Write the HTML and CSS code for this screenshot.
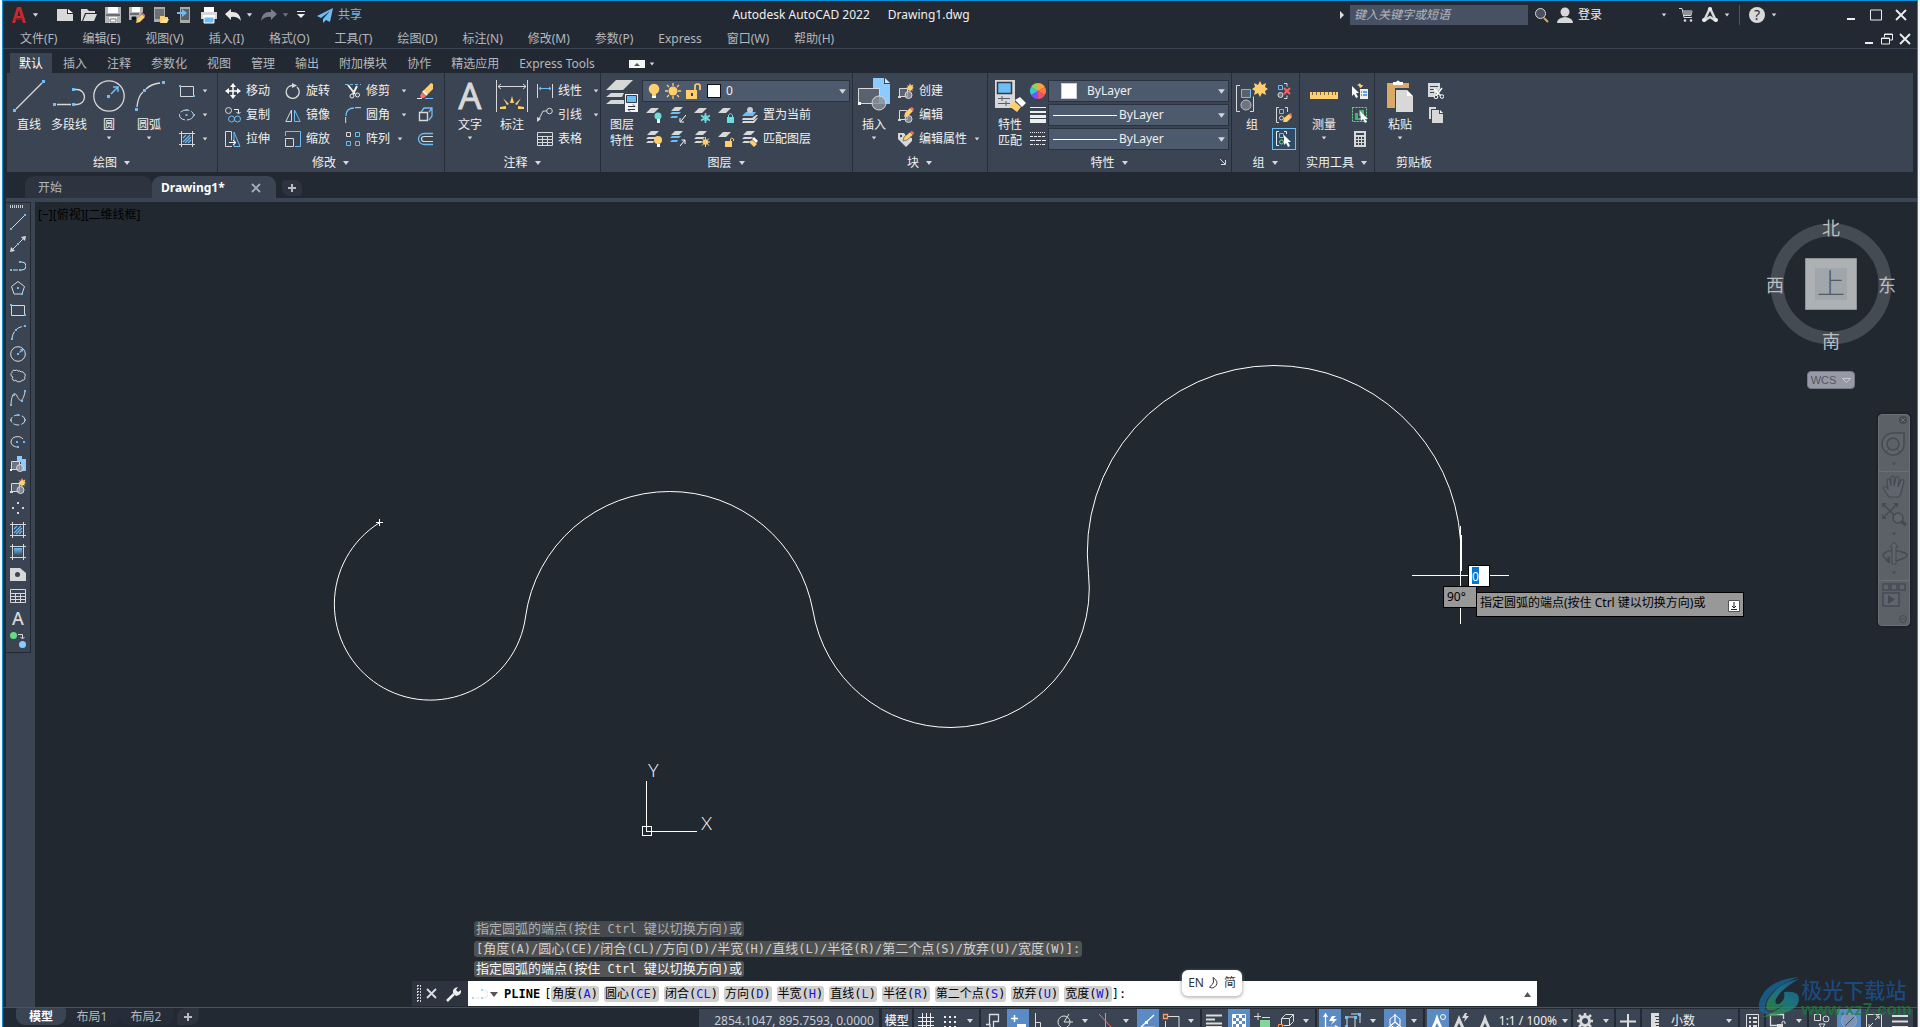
FILE: index.html
```html
<!DOCTYPE html>
<html lang="zh-CN">
<head>
<meta charset="utf-8">
<title>Autodesk AutoCAD 2022 Drawing1.dwg</title>
<link rel="stylesheet" href="styles.css">
</head>
<body>
<svg class="defs" aria-hidden="true">
  <defs>
    <linearGradient id="grad" x1="0" y1="0" x2="0" y2="1"><stop offset="0" stop-color="#6dbdf7"/><stop offset="1" stop-color="#3b4453"/></linearGradient>
    <linearGradient id="swirl" x1="1" y1="0" x2="0.3" y2="1"><stop offset="0" stop-color="#1766a8"/><stop offset="0.5" stop-color="#1c8a9a"/><stop offset="1" stop-color="#2d9a3a"/></linearGradient>
    <symbol id="dn" viewBox="0 0 8 4"><path d="M1 0h6L4 4z" fill="#d8d8d8"/></symbol>
    <symbol id="line" viewBox="0 0 16 16"><path d="M2 14L14 2" stroke="#d8d8d8"/><path d="M0 14h2v2H0zM14 0h2v2h-2z" fill="#6dbdf7"/></symbol>
    <symbol id="xline" viewBox="0 0 16 16"><path d="M2 14L14 2" stroke="#d8d8d8"/><path d="M0 16l1-5 4 4zM16 0l-1 5-4-4z" fill="#d8d8d8"/><path d="M7 7h2v2H7z" fill="#6dbdf7"/></symbol>
    <symbol id="pline" viewBox="0 0 16 16"><path d="M3 12h5M11 4h1a4 4 0 0 1 0 8h-1" fill="none" stroke="#d8d8d8"/><path d="M0 11h2v2H0zM9 11h2v2H9zM9 3h2v2H9z" fill="#6dbdf7"/></symbol>
    <symbol id="polygon" viewBox="0 0 16 16"><path d="M8 1.500L14.500 6.500 12 14H4L1.500 6.500z" fill="none" stroke="#d8d8d8"/><path d="M7 7h2v2H7zM11 13h2v2h-2z" fill="#6dbdf7"/></symbol>
    <symbol id="rect" viewBox="0 0 16 16"><path d="M1.500 3.500h13v10h-13z" fill="none" stroke="#d8d8d8"/><path d="M0 2h2v2H0zM14 12h2v2h-2z" fill="#6dbdf7"/></symbol>
    <symbol id="arc" viewBox="0 0 16 16"><path d="M2 14Q4 3 15 2" fill="none" stroke="#d8d8d8" stroke-dasharray="7 2"/><path d="M1 14h2v2H1zM5 5h2v2H5zM14 1h2v2h-2z" fill="#6dbdf7"/></symbol>
    <symbol id="circle" viewBox="0 0 16 16"><circle cx="8" cy="8" r="7.300" fill="none" stroke="#d8d8d8"/><path d="M7 7h2v2H7zM10 3h3v3l-1-1-2 2-1-1 2-2z" fill="#6dbdf7"/></symbol>
    <symbol id="cloud" viewBox="0 0 16 16"><path d="M3 9a2.500 2.500 0 0 1-1-4.500A2 2 0 0 1 5 2.500a2 2 0 0 1 3 .8 2 2 0 0 1 3 .7 2 2 0 0 1 3 1.500 2 2 0 0 1 .5 3.500A2 2 0 0 1 12 12a2 2 0 0 1-3 1.500A2 2 0 0 1 6 12 2 2 0 0 1 3 9z" fill="none" stroke="#d8d8d8"/></symbol>
    <symbol id="spline" viewBox="0 0 16 16"><path d="M1 14C2 2 5 2 7 6s5 9 8-4" fill="none" stroke="#d8d8d8"/><path d="M0 14h2v2H0zM3 4h2v2H3zM11 10h2v2h-2zM14 0h2v2h-2z" fill="#6dbdf7"/></symbol>
    <symbol id="ellipse" viewBox="0 0 16 16"><ellipse cx="8" cy="8" rx="7" ry="5" fill="none" stroke="#d8d8d8" stroke-dasharray="6 2"/><path d="M0 7h2v2H0zM14 7h2v2h-2zM7 2h2v2H7z" fill="#6dbdf7"/></symbol>
    <symbol id="ellipse2" viewBox="0 0 16 16"><ellipse cx="7.500" cy="8" rx="7" ry="5" fill="none" stroke="#d8d8d8" stroke-dasharray="9 2"/><path d="M6.500 7h2v2h-2zM14 7h2v2h-2zM6.500 2h2v2h-2z" fill="#6dbdf7"/></symbol>
    <symbol id="earc" viewBox="0 0 16 16"><path d="M13 5C10 1 1 2 1 8c0 3 3 5 7 5" fill="none" stroke="#d8d8d8"/><path d="M6 7h2v2H6zM13 7h2v2h-2zM7 12h2v2H7z" fill="#6dbdf7"/></symbol>
    <symbol id="blockins" viewBox="0 0 16 16"><path d="M7 0h5v3h4v12h-5V6H7z" fill="#8ccbff"/><path d="M1.500 5.500h8v8h-8z" fill="#6e7480" stroke="#d8d8d8"/><circle cx="10" cy="12" r="3.500" fill="#9aa0aa" fill-opacity=".7" stroke="#d8d8d8"/><path d="M0 13h2v2H0z" fill="#fff"/></symbol>
    <symbol id="blockmk" viewBox="0 0 16 16"><path d="M1.500 5.500h8v8h-8z" fill="#5a6270" stroke="#d8d8d8"/><circle cx="10.500" cy="12" r="3.500" fill="#9aa0aa" fill-opacity=".7" stroke="#d8d8d8"/><path d="M0 13h3v2H0z" fill="#d8d8d8"/><path d="M12 0l1 2.500 2.500-1-1 2.500L16 5l-2 1 1 2-2-1-1 2-1-2-2 1 1-2-2-1 2-1-1-2 2 1z" fill="#ffcf6f"/></symbol>
    <symbol id="blocked" viewBox="0 0 16 16"><path d="M9 3.500H1.500v9h8z" fill="none" stroke="#d8d8d8"/><circle cx="10.500" cy="12" r="3.500" fill="#9aa0aa" fill-opacity=".7" stroke="#d8d8d8"/><path d="M0 12h3v2H0z" fill="#d8d8d8"/><path d="M6 10l1-4 5-5 3 3-5 5z" fill="#ffcf6f"/><path d="M12 1l2-1 2 2-1 2z" fill="#ff6b6b"/></symbol>
    <symbol id="tagedit" viewBox="0 0 16 16"><path d="M0 2h6l2 3 6 2v3l-6 6-8-8z" fill="#d8d8d8"/><circle cx="3" cy="5" r="1.200" fill="#3b4453"/><path d="M5 10l1-4 6-5 3 3-6 5z" fill="#ffcf6f" stroke="#3b4453" stroke-width=".6"/><path d="M12 1l2-1 2 2-1 2z" fill="#ff6b6b"/></symbol>
    <symbol id="points" viewBox="0 0 16 16"><path d="M7 2h2v2H7zM2 7h2v2H2zM12 7h2v2h-2zM7 12h2v2H7z" fill="#d8d8d8"/></symbol>
    <symbol id="hatch" viewBox="0 0 16 16"><path d="M2.500 0v16M13.500 0v16M0 2.500h16M0 13.500h16" stroke="#d8d8d8"/><path d="M4 7l3-3M4 11l7-7M6 12l6-6M9 12l3-3" stroke="#6dbdf7" stroke-width="1.200"/></symbol>
    <symbol id="gradient" viewBox="0 0 16 16"><path d="M2.500 0v16M13.500 0v16M0 2.500h16M0 13.500h16" stroke="#d8d8d8"/><path d="M4 4h8v8H4z" fill="url(#grad)"/></symbol>
    <symbol id="region" viewBox="0 0 16 16"><path d="M0 2h10l6 5v8H0z" fill="#d8d8d8"/><circle cx="7.500" cy="8.500" r="2.500" fill="#3b4453"/></symbol>
    <symbol id="table" viewBox="0 0 16 16"><path d="M.5 1.500h15v13H.5zM.5 5.500h15M.5 8.500h15M.5 11.500h15M5.500 5v10M10.500 5v10" fill="none" stroke="#d8d8d8"/></symbol>
    <symbol id="addsel" viewBox="0 0 16 16"><circle cx="3.500" cy="3.500" r="3.500" fill="#60dd85"/><circle cx="12.500" cy="12.500" r="3.500" fill="#8ccbff"/><path d="M8 2.500h4.500V6M10.500 5l2 2 2-2" fill="none" stroke="#d8d8d8"/></symbol>
    <symbol id="move" viewBox="0 0 16 16"><path d="M8 2v12M2 8h12" stroke="#fff" stroke-width="1.500"/><path d="M8 0l3 4H5zM8 16l3-4H5zM0 8l4-3v6zM16 8l-4-3v6z" fill="#fff"/></symbol>
    <symbol id="rotate" viewBox="0 0 16 16"><path d="M9 2.500A6.500 6.500 0 1 0 12 4" fill="none" stroke="#d8d8d8" stroke-width="1.300"/><path d="M7 0l5 2.500L7 5z" fill="#d8d8d8"/></symbol>
    <symbol id="trim" viewBox="0 0 16 16"><path d="M0 1.500h16" stroke="#6dbdf7" stroke-dasharray="3 2"/><path d="M3 2l7 9M12 3L8 11" stroke="#eee" stroke-width="2"/><circle cx="7" cy="13" r="2" fill="none" stroke="#eee"/><circle cx="12.500" cy="12" r="2" fill="none" stroke="#eee"/></symbol>
    <symbol id="erase" viewBox="0 0 16 16"><path d="M0 15.500h5" stroke="#eee"/><path d="M8 15.500h8" stroke="#6dbdf7"/><path d="M14 0l2 1v5l-7 7-4-4z" fill="#ffcf6f"/><path d="M5 9l4 4-2 2H4l-1-2z" fill="#ff6b6b"/><path d="M6 8l4 4" stroke="#fff" stroke-width="1.500"/></symbol>
    <symbol id="copy" viewBox="0 0 16 16"><circle cx="3.500" cy="3.500" r="3" fill="none" stroke="#d8d8d8"/><path d="M9 2.500h4.500V6M11.500 5l2 2 2-2" fill="none" stroke="#eee"/><circle cx="6.500" cy="12" r="3" fill="none" stroke="#6dbdf7"/><circle cx="12.500" cy="12" r="3" fill="none" stroke="#6dbdf7"/></symbol>
    <symbol id="mirror" viewBox="0 0 16 16"><path d="M6.500 3v11.500H.8z" fill="none" stroke="#d8d8d8"/><path d="M9.500 3v11.500h5.700z" fill="none" stroke="#6dbdf7"/></symbol>
    <symbol id="fillet" viewBox="0 0 16 16"><path d="M1 9Q1 1 9 1" fill="none" stroke="#6dbdf7" stroke-width="1.300"/><path d="M.7 10v6M10 .7h6" stroke="#d8d8d8"/></symbol>
    <symbol id="explode" viewBox="0 0 16 16"><path d="M4 5l3-4h8v8l-3 4M12 5l3-4" fill="none" stroke="#6dbdf7" stroke-width="1.300"/><path d="M2.500 5.500h8v8h-8z" fill="none" stroke="#d8d8d8" stroke-width="1.400"/></symbol>
    <symbol id="stretch" viewBox="0 0 16 16"><path d="M7 15.500H.5V.5h6v9" fill="none" stroke="#d8d8d8"/><path d="M9 1l6 14.500H9V1" fill="none" stroke="#6dbdf7"/><path d="M4 11.500h6M8 9l3 2.500L8 14" fill="none" stroke="#fff"/></symbol>
    <symbol id="scale" viewBox="0 0 16 16"><path d="M.5 5V.5h15v15H10" fill="none" stroke="#6dbdf7"/><path d="M.5 7.500h8v8h-8z" fill="none" stroke="#d8d8d8"/></symbol>
    <symbol id="array" viewBox="0 0 16 16"><path d="M1.500 1.500h4v4h-4z" fill="none" stroke="#d8d8d8"/><path d="M10.500 1.500h4v4h-4zM1.500 10.500h4v4h-4zM10.500 10.500h4v4h-4z" fill="none" stroke="#6dbdf7"/></symbol>
    <symbol id="offset" viewBox="0 0 16 16"><path d="M16 2.500H7a5.500 5.500 0 0 0 0 11h9" fill="none" stroke="#6dbdf7" stroke-width="1.300"/><path d="M16 5.500H7a2.500 2.500 0 0 0 0 5h9" fill="none" stroke="#d8d8d8" stroke-width="1.200"/></symbol>
    <symbol id="dimlin" viewBox="0 0 16 16"><path d="M.5 1v14M15.500 1v14" stroke="#d8d8d8"/><path d="M2 5.500h12M4 4L2 5.500 4 7M12 4l2 1.500L12 7" fill="none" stroke="#6dbdf7"/></symbol>
    <symbol id="leader" viewBox="0 0 16 16"><circle cx="12.500" cy="4" r="2.800" fill="none" stroke="#d8d8d8"/><path d="M10 4H6L2 12" fill="none" stroke="#d8d8d8"/><path d="M0 15v-5l4 2z" fill="#d8d8d8"/></symbol>
    <symbol id="bulb" viewBox="0 0 12 16"><circle cx="6" cy="6" r="5.300" fill="#ffcf6f"/><path d="M4 11h4v2H4z" fill="#ffcf6f"/><path d="M4 13h4v2H4z" fill="#fff"/></symbol>
    <symbol id="sun" viewBox="0 0 16 16"><circle cx="8" cy="8" r="4.500" fill="#ffcf6f"/><path d="M8 0v3M8 13v3M0 8h3M13 8h3M2 2l2 2M12 12l2 2M2 14l2-2M12 4l2-2" stroke="#ffcf6f" stroke-width="1.300"/></symbol>
    <symbol id="unlock" viewBox="0 0 16 16"><path d="M0 7h11v9H0z" fill="#ffcf6f"/><path d="M9 7V3q0-2 2.500-2T14 3v4" fill="none" stroke="#ffcf6f" stroke-width="1.700"/><path d="M5 10h2v3H5z" fill="#3b4453"/></symbol>
    <symbol id="lyr" viewBox="0 0 16 16"><path d="M5 1h8L8 6H0z" fill="#d8d8d8"/></symbol>
    <symbol id="lyrs" viewBox="0 0 16 16"><path d="M5 0h8L9 4H1zM2 6h9l-2 2H0zM2 10h6l-1 2H0z" fill="#d8d8d8"/></symbol>
    <symbol id="loff" viewBox="0 0 16 16"><use href="#lyr"/><circle cx="12" cy="9" r="3.500" fill="#6fdcdc"/><path d="M11 12h3v4h-3z" fill="#dff"/></symbol>
    <symbol id="liso" viewBox="0 0 16 16"><path d="M5 0h8L9 4H1z" fill="#d8d8d8"/><path d="M2 5h9l-2 2H0zM2 9h6l-1 2H0z" fill="#6dbdf7"/><path d="M16 8l-5 6M10 11v4h4" fill="none" stroke="#fff"/></symbol>
    <symbol id="lfrz" viewBox="0 0 16 16"><use href="#lyr"/><path d="M11.500 6v10M7 8.500l9 5M16 8.500l-9 5" stroke="#6fdcdc" stroke-width="1.600"/><circle cx="11.500" cy="11" r="2.500" fill="none" stroke="#6fdcdc"/></symbol>
    <symbol id="llock" viewBox="0 0 16 16"><use href="#lyr"/><path d="M9 10h7v6H9z" fill="#6fdcdc"/><path d="M10.500 10V8q2-3 4 0v2" fill="none" stroke="#6fdcdc"/></symbol>
    <symbol id="lcur" viewBox="0 0 16 16"><path d="M4 5h10l-3 4H0z" fill="#6dbdf7"/><circle cx="8" cy="3" r="3" fill="#c8ccd2"/><path d="M14 8h2l-4 5H0l1-2h9zM15 11h1l-4 5H0l1-2h10z" fill="#d8d8d8"/></symbol>
    <symbol id="lon" viewBox="0 0 16 16"><use href="#lyrs"/><circle cx="12" cy="9" r="4" fill="#ffcf6f"/><path d="M11 13h3v3h-3z" fill="#fff"/></symbol>
    <symbol id="luniso" viewBox="0 0 16 16"><path d="M5 0h8L9 4H1z" fill="#d8d8d8"/><path d="M2 5h9l-2 2H0zM2 9h6l-1 2H0z" fill="#6dbdf7"/><path d="M10 15l5-6M11.500 9H15v4" fill="none" stroke="#fff"/></symbol>
    <symbol id="lthaw" viewBox="0 0 16 16"><use href="#lyrs"/><circle cx="11.500" cy="11" r="2.800" fill="#ffcf6f"/><path d="M11.500 6v10M6.500 11h10M8 7.500l7 7M15 7.500l-7 7" stroke="#ffcf6f"/></symbol>
    <symbol id="lunl" viewBox="0 0 16 16"><use href="#lyr"/><path d="M7 10h7v6H7z" fill="#ffcf6f"/><path d="M12.500 10V8q1-2 3 0v2" fill="none" stroke="#ffcf6f"/></symbol>
    <symbol id="lmatch" viewBox="0 0 16 16"><use href="#lyrs"/><path d="M7 11l3-2 5 4-3 3z" fill="#ffcf6f"/><path d="M10 8l2-2 4 4-2 2z" fill="#fff"/></symbol>
    <symbol id="ltypes" viewBox="0 0 16 16"><path d="M0 .5h16" stroke="#eee"/><path d="M0 5h16" stroke="#eee" stroke-width="2"/><path d="M0 9.500h16" stroke="#eee" stroke-width="3"/><path d="M0 14h16" stroke="#eee" stroke-width="4"/></symbol>
    <symbol id="ldash" viewBox="0 0 16 16"><path d="M0 1.500h16" stroke="#eee" stroke-dasharray="1 1"/><path d="M0 5.500h16" stroke="#eee" stroke-dasharray="3 1"/><path d="M0 9.500h16" stroke="#eee" stroke-dasharray="5 1"/><path d="M0 13.500h16" stroke="#eee" stroke-dasharray="3 1 1 1"/></symbol>
    <symbol id="wheel" viewBox="0 0 16 16"><path d="M8 8L8 0a8 8 0 0 1 6.900 4z" fill="#ffa03c"/><path d="M8 8l6.900-4a8 8 0 0 1 0 8z" fill="#ff7a3c"/><path d="M8 8l6.900 4A8 8 0 0 1 8 16z" fill="#f0506a"/><path d="M8 8v8a8 8 0 0 1-6.900-4z" fill="#7a50ff"/><path d="M8 8l-6.900 4a8 8 0 0 1 0-8z" fill="#38c8d8"/><path d="M8 8L1.100 4A8 8 0 0 1 8 0z" fill="#8fd35a"/></symbol>
    <symbol id="ungrp" viewBox="0 0 16 16"><path d="M2.500 2.500h4v4h-4z" fill="none" stroke="#6dbdf7"/><circle cx="4.500" cy="12" r="2.500" fill="#6e7480" stroke="#d8d8d8"/><path d="M8 .5h3v3M8 15.500h3v-3" fill="none" stroke="#d8d8d8"/><path d="M8 5l6 6M14 5l-6 6" stroke="#ff5e5e" stroke-width="2"/></symbol>
    <symbol id="grped" viewBox="0 0 16 16"><path d="M3 .5H.5v15H3M9 .5h2.500V5" fill="none" stroke="#d8d8d8"/><path d="M3.500 2.500h4v4h-4z" fill="none" stroke="#6dbdf7"/><circle cx="5.500" cy="11" r="2" fill="none" stroke="#d8d8d8"/><path d="M7 15l1-4 5-4 3 3-5 5z" fill="#ffcf6f"/><path d="M13 7l2-1 1 2-1 2z" fill="#ff6b6b"/></symbol>
    <symbol id="grpsel" viewBox="0 0 16 16"><path d="M3 .5H.5v14H3M8 .5h2.500V3" fill="none" stroke="#eee"/><path d="M3.500 2.500h4v4h-4z" fill="none" stroke="#60dd85"/><circle cx="5.500" cy="11" r="2" fill="none" stroke="#60dd85"/><path d="M8 4l7 7h-3l2 4-2 1-2-4-2 2z" fill="#fff"/></symbol>
    <symbol id="qsel" viewBox="0 0 16 16"><path d="M0 3l7 7H4l2 4-2 1-2-4-2 2z" fill="#fff"/><path d="M8 0l1 2 2 0-1 2-2 1-1-2-2-1 2-1z" fill="#ffcf6f"/><path d="M8 6h8v10H8z" fill="#eee"/><path d="M9 9h1M11 9h4M9 12h1M11 12h4" stroke="#2a8de0" stroke-width="1.500"/></symbol>
    <symbol id="selall" viewBox="0 0 16 16"><path d="M.5.500h14v14H.5z" fill="none" stroke="#60dd85" stroke-dasharray="2 1"/><path d="M3 6h3v5h4v2H3zM7 3h5v6H7z" fill="#4fae6e"/><path d="M8 4l8 8h-3l2 3-2 1-2-4-2 2z" fill="#fff"/></symbol>
    <symbol id="calc" viewBox="0 0 16 16"><path d="M2 0h12v16H2z" fill="#d8d8d8"/><path d="M4 2h8v2H4zM4 6h2v2H4zM7 6h2v2H7zM10 6h2v2h-2zM4 9h2v2H4zM7 9h2v2H7zM10 9h2v2h-2zM4 12h2v2H4zM7 12h2v2H7zM10 12h2v2h-2z" fill="#3b4453"/></symbol>
    <symbol id="cut" viewBox="0 0 16 16"><path d="M0 0h12v6l-6 8H0z" fill="#d8d8d8"/><path d="M2 3.500h8M2 6.500h5M2 9.500h4" stroke="#3b4453"/><path d="M6 6l7 7M14 5l-6 8" stroke="#fff" stroke-width="1.500"/><circle cx="8" cy="14" r="1.800" fill="#3b4453" stroke="#fff"/><circle cx="14" cy="13.500" r="1.800" fill="#3b4453" stroke="#fff"/></symbol>
    <symbol id="copyclip" viewBox="0 0 16 16"><path d="M1 0h7v2H3v10H1z" fill="#d8d8d8"/><path d="M4 3h7v4h4v9H4z" fill="#d8d8d8"/><path d="M12 3v3h3z" fill="#fff"/></symbol>
    <symbol id="launch" viewBox="0 0 8 8"><path d="M1 1l5 5M6.500 2v4.500H2" fill="none" stroke="#d8d8d8"/></symbol>
    <symbol id="winmin" viewBox="0 0 12 12"><path d="M2 10h8" stroke="#eee" stroke-width="2"/></symbol>
    <symbol id="winmax" viewBox="0 0 12 12"><path d="M.5 1h11v10H.5z" fill="none" stroke="#eee"/></symbol>
    <symbol id="winres" viewBox="0 0 12 12"><path d="M3.500 4V1h8v6H8.500M.5 5h8v6h-8z" fill="none" stroke="#eee"/><path d="M3 1.500h9M0 5.500h9" stroke="#eee"/></symbol>
    <symbol id="winx" viewBox="0 0 12 12"><path d="M1 1l10 10M11 1L1 11" stroke="#eee" stroke-width="1.800"/></symbol>
  </defs>
</svg>

<div class="frame">
  <header class="titlebar">
    <div class="quick">
      <button class="app" aria-label="AutoCAD"><svg width="14" height="16" viewBox="0 0 14 16"><path d="M5 0h4l5 16h-3l-2-5H5l-2 5H0zM7 3L5.500 9h3z" fill="#c8282e"/><path d="M4 11h6l1 2H3z" fill="#8c1c22"/></svg><svg class="dn"><use href="#dn"/></svg></button>
      <button aria-label="新建"><svg width="16" height="16"><path d="M0 2h10v5h6v7H0z" fill="#d8d8d8"/><path d="M11 2l5 4h-5z" fill="#fff"/></svg></button>
      <button aria-label="打开"><svg width="16" height="16"><path d="M0 2h6l2 2h6v2H4L1 14H0z" fill="#d8d8d8"/><path d="M5 7h11l-3 7H2z" fill="#d8d8d8"/></svg></button>
      <button aria-label="保存"><svg width="16" height="16"><path d="M0 0h16v16H0z" fill="#b4b4b4"/><path d="M3 0h10v6H3z" fill="#fff"/><path d="M1 8h14" stroke="#222933"/><path d="M4 10h8v6H4z" fill="#f5f5f5"/><path d="M5 12h6v3H5z" fill="#fff" stroke="#777"/></svg></button>
      <button aria-label="另存为"><svg width="16" height="16"><path d="M0 0h14v5l-6 8H0z" fill="#b4b4b4"/><path d="M3 0h8v5H3z" fill="#fff"/><path d="M1 7h9M3 10h4v3H3z" stroke="#222933"/><path d="M7 16l1-4 5-5 3 3-5 5z" fill="#ffcf6f"/><path d="M13 7l1-1 2 2v2z" fill="#ff6b6b"/></svg></button>
      <button aria-label="从移动设备打开"><svg width="16" height="16"><path d="M1 0h11v15H1z" fill="#aaa"/><path d="M2 2h9v10H2z" fill="#6c7076"/><path d="M7 9h4l1 1h3v2H9l-2 4z" fill="#ffcf6f"/><path d="M9 12h7l-2 4H7z" fill="#ffe08f"/></svg></button>
      <button aria-label="保存到移动设备"><svg width="16" height="16"><path d="M3 0h10v16H3z" fill="#aaa"/><path d="M4 2h8v11H4z" fill="#5c6066"/><path d="M0 5h5V2l5 4-5 4V7H0z" fill="#6dbdf7"/></svg></button>
      <button aria-label="打印"><svg width="16" height="16"><path d="M3 0h10v5H3z" fill="#fff"/><path d="M0 5h16v7H0z" fill="#d8d8d8"/><path d="M2 8h12v2H2z" fill="#fff"/><path d="M3 10h10v6H3z" fill="#6dbdf7" stroke="#fff"/></svg></button>
      <button aria-label="放弃"><svg width="16" height="16"><path d="M0 7l6-5v3q9-1 10 9-4-5-10-4v3z" fill="#e8e8e8"/></svg><svg class="dn"><use href="#dn"/></svg></button>
      <button class="dim" aria-label="重做"><svg width="16" height="16"><path d="M16 7l-6-5v3Q1 4 0 14q4-5 10-4v3z" fill="#e8e8e8"/></svg><svg class="dn"><use href="#dn"/></svg></button>
      <button aria-label="自定义"><svg width="8" height="8"><path d="M0 .5h8" stroke="#eee"/><path d="M0 3h8L4 7z" fill="#eee"/></svg></button>
      <button class="share"><svg width="16" height="16"><path d="M16 1L0 9l4 2L13 4 6 12l0 4 3-3 4 2z" fill="#6dbdf7"/></svg>共享</button>
    </div>
    <h1 class="apptitle"><span>Autodesk AutoCAD 2022</span><span>Drawing1.dwg</span></h1>
    <div class="account">
      <svg class="fly" width="4" height="8"><path d="M0 0v8l4-4z" fill="#ddd"/></svg>
      <input class="search" type="text" placeholder="键入关键字或短语" aria-label="搜索">
      <button aria-label="搜索"><svg width="16" height="16"><circle cx="6.500" cy="6.500" r="5" fill="#4a5060" stroke="#d8d8d8"/><path d="M10 11l4 4" stroke="#e0a860" stroke-width="2"/></svg></button>
      <button class="login"><svg width="16" height="16"><circle cx="8" cy="5" r="4.500" fill="#d8d8d8"/><path d="M0 16q0-5 8-6 8 1 8 6z" fill="#d8d8d8"/></svg><span>登录</span><svg class="dn sm-dn"><use href="#dn"/></svg></button>
      <button aria-label="购物车"><svg width="14" height="16"><path d="M0 1.500h3l2 9h8M3.500 4H13l-1 4.500H5" fill="none" stroke="#d8d8d8"/><path d="M4 4h9l-1 4H5z" fill="#8d9096"/><circle cx="6" cy="13.500" r="1.300" fill="#ddd"/><circle cx="12" cy="13.500" r="1.300" fill="#ddd"/></svg></button>
      <button class="adsk" aria-label="应用程序"><svg width="16" height="16"><path d="M8 1L2 14M8 1l6 13M2 14l6-4 6 4" fill="none" stroke="#d8d8d8" stroke-width="2.500"/><circle cx="8" cy="2" r="2" fill="#eee"/><circle cx="2" cy="13" r="2" fill="#eee"/><circle cx="14" cy="13" r="2" fill="#eee"/></svg><svg class="dn sm-dn"><use href="#dn"/></svg></button>
      <button class="help" aria-label="帮助"><svg width="16" height="16"><circle cx="8" cy="8" r="8" fill="#d8d8d8"/><text x="8" y="13" text-anchor="middle" class="q">?</text></svg><svg class="dn sm-dn"><use href="#dn"/></svg></button>
    </div>
    <div class="winbtns"><button aria-label="最小化"><svg width="12" height="12"><use href="#winmin"/></svg></button><button aria-label="最大化"><svg width="12" height="12"><use href="#winmax"/></svg></button><button aria-label="关闭"><svg width="12" height="12"><use href="#winx"/></svg></button></div>
  </header>

  <div class="menurow">
    <nav class="menus"><a href="#">文件(F)</a><a href="#">编辑(E)</a><a href="#">视图(V)</a><a href="#">插入(I)</a><a href="#">格式(O)</a><a href="#">工具(T)</a><a href="#">绘图(D)</a><a href="#">标注(N)</a><a href="#">修改(M)</a><a href="#">参数(P)</a><a href="#">Express</a><a href="#">窗口(W)</a><a href="#">帮助(H)</a></nav>
    <div class="docbtns"><button aria-label="最小化图形"><svg width="12" height="12"><use href="#winmin"/></svg></button><button aria-label="还原图形"><svg width="12" height="12"><use href="#winres"/></svg></button><button aria-label="关闭图形"><svg width="12" height="12"><use href="#winx"/></svg></button></div>
  </div>

  <nav class="rtabs">
    <button class="on">默认</button><button>插入</button><button>注释</button><button>参数化</button><button>视图</button><button>管理</button><button>输出</button><button>附加模块</button><button>协作</button><button>精选应用</button><button>Express Tools</button>
    <button class="mini" aria-label="最小化功能区"><svg width="16" height="8"><path d="M0 0h16v8H0z" fill="#f5f5f5"/><path d="M5 6h6L8 3z" fill="#555"/></svg><svg class="dn"><use href="#dn"/></svg></button>
  </nav>

  <section class="ribbon">
    <div class="panel p-draw">
      <div class="tools">
        <button class="big"><svg width="32" height="32"><path d="M3 29L29 3" stroke="#d8d8d8" stroke-width="1.300"/><path d="M0 29h3v3H0zM29 0h3v3h-3z" fill="#6dbdf7"/></svg>直线</button>
        <button class="big"><svg width="32" height="32"><path d="M4 24.500h14M22 9.500h2a7.500 7.500 0 0 1 0 15h-2" fill="none" stroke="#d8d8d8" stroke-width="1.300"/><path d="M0 23h3v3H0zM19 23h3v3h-3zM19 8h3v3h-3z" fill="#6dbdf7"/></svg>多段线</button>
        <button class="big"><svg width="32" height="32"><circle cx="16" cy="16" r="15.200" fill="none" stroke="#d8d8d8" stroke-width="1.300"/><path d="M18 14l7-7M20 7h5v5" fill="none" stroke="#6dbdf7" stroke-width="1.500"/><path d="M14 15h3v3h-3z" fill="#6dbdf7"/></svg>圆<svg class="dn"><use href="#dn"/></svg></button>
        <button class="big"><svg width="32" height="32"><path d="M4 27Q5 16 10 12M13 9Q18 4 27 3" fill="none" stroke="#d8d8d8" stroke-width="1.300"/><path d="M2 28h3v3H2zM10 9h3v3h-3zM29 1h3v3h-3z" fill="#6dbdf7"/></svg>圆弧<svg class="dn"><use href="#dn"/></svg></button>
        <div class="col">
          <button class="sm" aria-label="矩形"><svg><use href="#rect"/></svg><svg class="dn"><use href="#dn"/></svg></button>
          <button class="sm" aria-label="椭圆"><svg><use href="#ellipse2"/></svg><svg class="dn"><use href="#dn"/></svg></button>
          <button class="sm" aria-label="图案填充"><svg><use href="#hatch"/></svg><svg class="dn"><use href="#dn"/></svg></button>
        </div>
      </div>
      <button class="ptitle">绘图<svg class="dn"><use href="#dn"/></svg></button>
    </div>

    <div class="panel p-modify">
      <div class="tools grid4">
        <button class="sm"><svg><use href="#move"/></svg>移动</button><button class="sm"><svg><use href="#rotate"/></svg>旋转</button><button class="sm"><svg><use href="#trim"/></svg>修剪<svg class="dn end"><use href="#dn"/></svg></button><button class="sm" aria-label="删除"><svg><use href="#erase"/></svg></button>
        <button class="sm"><svg><use href="#copy"/></svg>复制</button><button class="sm"><svg><use href="#mirror"/></svg>镜像</button><button class="sm"><svg><use href="#fillet"/></svg>圆角<svg class="dn end"><use href="#dn"/></svg></button><button class="sm" aria-label="分解"><svg><use href="#explode"/></svg></button>
        <button class="sm"><svg><use href="#stretch"/></svg>拉伸</button><button class="sm"><svg><use href="#scale"/></svg>缩放</button><button class="sm"><svg><use href="#array"/></svg>阵列<svg class="dn"><use href="#dn"/></svg></button><button class="sm" aria-label="偏移"><svg><use href="#offset"/></svg></button>
      </div>
      <button class="ptitle">修改<svg class="dn"><use href="#dn"/></svg></button>
    </div>

    <div class="panel p-anno">
      <div class="tools">
        <button class="big"><svg width="32" height="32"><text x="16" y="29" text-anchor="middle" class="bigA">A</text></svg>文字<svg class="dn"><use href="#dn"/></svg></button>
        <button class="big"><svg width="32" height="32"><path d="M.5 0v32M31.500 0v32M2 6.500h28M5 4L2 6.500 5 9M27 4l3 2.500L27 9" fill="none" stroke="#d8d8d8"/><path d="M16 16l2 7h-4zM7 18l6 6-2 1zM25 18l-6 6 2 1zM4 27l6-1v3H4zM28 27l-6-1v3h6z" fill="#ffcf6f"/></svg>标注</button>
        <div class="col">
          <button class="sm"><svg><use href="#dimlin"/></svg>线性<svg class="dn end"><use href="#dn"/></svg></button>
          <button class="sm"><svg><use href="#leader"/></svg>引线<svg class="dn end"><use href="#dn"/></svg></button>
          <button class="sm"><svg><use href="#table"/></svg>表格</button>
        </div>
      </div>
      <button class="ptitle">注释<svg class="dn"><use href="#dn"/></svg></button>
    </div>

    <div class="panel p-layer">
      <div class="tools">
        <button class="big two"><svg width="32" height="32"><path d="M10 0h17L17 10H0zM5 13h13l-2 4H0zM5 20h13v4H0z" fill="#d8d8d8"/><path d="M19 14h13v18H19z" fill="#f2f2f2"/><path d="M20.500 15.500h10v7h-10z" fill="#6dbdf7" stroke="#333b48"/><path d="M22 26.500h7l-2-2M29 29.500h-7l2 2" fill="none" stroke="#333b48"/></svg>图层<br>特性</button>
        <div class="col wide">
          <div class="combo layercombo"><svg width="12" height="16"><use href="#bulb"/></svg><svg width="16" height="16"><use href="#sun"/></svg><svg width="16" height="16"><use href="#unlock"/></svg><i class="swatch small"></i><select aria-label="图层"><option>0</option></select><svg class="dn"><use href="#dn"/></svg></div>
          <div class="lrow"><button class="sm" aria-label="关"><svg><use href="#loff"/></svg></button><button class="sm" aria-label="隔离"><svg><use href="#liso"/></svg></button><button class="sm" aria-label="冻结"><svg><use href="#lfrz"/></svg></button><button class="sm" aria-label="锁定"><svg><use href="#llock"/></svg></button><button class="sm"><svg><use href="#lcur"/></svg>置为当前</button></div>
          <div class="lrow"><button class="sm" aria-label="打开所有图层"><svg><use href="#lon"/></svg></button><button class="sm" aria-label="取消隔离"><svg><use href="#luniso"/></svg></button><button class="sm" aria-label="解冻"><svg><use href="#lthaw"/></svg></button><button class="sm" aria-label="解锁"><svg><use href="#lunl"/></svg></button><button class="sm"><svg><use href="#lmatch"/></svg>匹配图层</button></div>
        </div>
      </div>
      <button class="ptitle">图层<svg class="dn"><use href="#dn"/></svg></button>
    </div>

    <div class="panel p-block">
      <div class="tools">
        <button class="big"><svg width="32" height="32"><path d="M15-2h11v6h6v20H15z" fill="#8ccbff"/><path d="M27-2l5 5h-5z" fill="#cfe8ff"/><path d="M.5 8.500h21v15H.5z" fill="#5a6270" stroke="#d8d8d8"/><circle cx="21" cy="23" r="7" fill="#8a909a" fill-opacity=".8" stroke="#d8d8d8"/><path d="M0 22h3v3H0z" fill="#fff"/></svg>插入<svg class="dn"><use href="#dn"/></svg></button>
        <div class="col">
          <button class="sm"><svg><use href="#blockmk"/></svg>创建</button>
          <button class="sm"><svg><use href="#blocked"/></svg>编辑</button>
          <button class="sm"><svg><use href="#tagedit"/></svg>编辑属性<svg class="dn"><use href="#dn"/></svg></button>
        </div>
      </div>
      <button class="ptitle">块<svg class="dn"><use href="#dn"/></svg></button>
    </div>

    <div class="panel p-prop">
      <div class="tools">
        <button class="big two"><svg width="32" height="32"><path d="M1 0h20v28H1z" fill="#d8d8d8"/><path d="M3.500 2.500h14v11h-14z" fill="#6dbdf7" stroke="#333b48" stroke-width="1.500"/><path d="M4 18.500h12M4 23.500h12M8 16v5M12 21v5" stroke="#555e6c"/><path d="M15 26l5-5 7 6-4 5z" fill="#ffcf6f"/><path d="M21 20l5-3 6 6-4 4z" fill="#fff"/></svg>特性<br>匹配</button>
        <div class="col icons"><button class="sm" aria-label="颜色"><svg><use href="#wheel"/></svg></button><button class="sm" aria-label="线宽"><svg><use href="#ltypes"/></svg></button><button class="sm" aria-label="线型"><svg><use href="#ldash"/></svg></button></div>
        <div class="col wide">
          <div class="combo color"><i class="swatch"></i><select aria-label="对象颜色"><option>ByLayer</option></select><svg class="dn"><use href="#dn"/></svg></div>
          <div class="combo"><i class="rule"></i><select aria-label="线宽"><option>ByLayer</option></select><svg class="dn"><use href="#dn"/></svg></div>
          <div class="combo"><i class="rule"></i><select aria-label="线型"><option>ByLayer</option></select><svg class="dn"><use href="#dn"/></svg></div>
        </div>
      </div>
      <div class="ptitlerow"><button class="ptitle">特性<svg class="dn"><use href="#dn"/></svg></button><button class="launch" aria-label="特性对话框"><svg width="8" height="8"><use href="#launch"/></svg></button></div>
    </div>

    <div class="panel p-group">
      <div class="tools">
        <button class="big"><svg width="32" height="32"><path d="M4 5.500H.5v26H4M14 31.500h3.500v-15" fill="none" stroke="#d8d8d8"/><path d="M5.500 9.500h9v8h-9z" fill="#5a6270" stroke="#6dbdf7"/><circle cx="10" cy="25" r="5" fill="#6e7480" stroke="#b8bcc4"/><path d="M24 1l2 4 4-2-1 4 3 2-3 2 1 4-4-2-2 4-2-4-4 2 1-4-3-2 3-2-1-4 4 2z" fill="#ffcf6f"/></svg>组</button>
        <div class="col"><button class="sm" aria-label="解除编组"><svg><use href="#ungrp"/></svg></button><button class="sm" aria-label="组编辑"><svg><use href="#grped"/></svg></button><button class="sm pressed" aria-label="启用组选择"><svg><use href="#grpsel"/></svg></button></div>
      </div>
      <button class="ptitle">组<svg class="dn"><use href="#dn"/></svg></button>
    </div>

    <div class="panel p-util">
      <div class="tools">
        <button class="big"><svg width="32" height="32"><path d="M2 12h28v7H2z" fill="#ffcf6f"/><path d="M4.500 12v3M8.500 12v3M12.500 12v3M16.500 12v3M20.500 12v3M24.500 12v3M27.500 12v3" stroke="#7d6738"/></svg>测量<svg class="dn"><use href="#dn"/></svg></button>
        <div class="col"><button class="sm" aria-label="快速选择"><svg><use href="#qsel"/></svg></button><button class="sm" aria-label="全部选择"><svg><use href="#selall"/></svg></button><button class="sm" aria-label="快速计算器"><svg><use href="#calc"/></svg></button></div>
      </div>
      <button class="ptitle">实用工具<svg class="dn"><use href="#dn"/></svg></button>
    </div>

    <div class="panel p-clip">
      <div class="tools">
        <button class="big"><svg width="32" height="32"><path d="M3 3h22v5H11v20H3z" fill="#d9a96a"/><path d="M9 2h3q2-3 4 0h3v3H9z" fill="#fff"/><path d="M12 10h11v6h6v16H12z" fill="#d8d8d8"/><path d="M23 10l6 6h-6z" fill="#fff"/></svg>粘贴<svg class="dn"><use href="#dn"/></svg></button>
        <div class="col"><button class="sm" aria-label="剪切"><svg><use href="#cut"/></svg></button><button class="sm" aria-label="复制"><svg><use href="#copyclip"/></svg></button></div>
      </div>
      <div class="ptitle">剪贴板</div>
    </div>
  </section>

  <nav class="filetabs">
    <button class="ftab">开始</button>
    <button class="ftab on"><span>Drawing1*</span><svg width="8" height="8"><path d="M0 0l8 8M8 0L0 8" stroke="#a8adb5" stroke-width="1.800"/></svg></button>
    <button class="plus" aria-label="新图形"><svg width="8" height="8"><path d="M4 0v8M0 4h8" stroke="#b8bcc2" stroke-width="2"/></svg></button>
  </nav>

  <main class="work">
    <aside class="dock">
      <div class="toolbox">
        <i class="grip"></i>
        <button aria-label="直线"><svg><use href="#line"/></svg></button>
        <button aria-label="构造线"><svg><use href="#xline"/></svg></button>
        <button aria-label="多段线"><svg><use href="#pline"/></svg></button>
        <button aria-label="多边形"><svg><use href="#polygon"/></svg></button>
        <button aria-label="矩形"><svg><use href="#rect"/></svg></button>
        <button aria-label="圆弧"><svg><use href="#arc"/></svg></button>
        <button aria-label="圆"><svg><use href="#circle"/></svg></button>
        <button aria-label="修订云线"><svg><use href="#cloud"/></svg></button>
        <button aria-label="样条曲线"><svg><use href="#spline"/></svg></button>
        <button aria-label="椭圆"><svg><use href="#ellipse"/></svg></button>
        <button aria-label="椭圆弧"><svg><use href="#earc"/></svg></button>
        <button aria-label="插入块"><svg><use href="#blockins"/></svg></button>
        <button aria-label="创建块"><svg><use href="#blockmk"/></svg></button>
        <button aria-label="点"><svg><use href="#points"/></svg></button>
        <button aria-label="图案填充"><svg><use href="#hatch"/></svg></button>
        <button aria-label="渐变色"><svg><use href="#gradient"/></svg></button>
        <button aria-label="面域"><svg><use href="#region"/></svg></button>
        <button aria-label="表格"><svg><use href="#table"/></svg></button>
        <button class="mtext" aria-label="多行文字">A</button>
        <button aria-label="添加选定对象"><svg><use href="#addsel"/></svg></button>
      </div>
    </aside>

    <section class="canvas">
      <svg class="drawing" shape-rendering="crispEdges">
        <g transform="translate(-35 -202)" fill="none" stroke="#fff">
          <path shape-rendering="auto" d="M379 523A96 96 0 1 0 525.500 617A145.200 145.200 0 0 1 669.500 491.500A145.200 145.200 0 0 1 813 611A139.300 139.300 0 0 0 951 727.500A139.300 139.300 0 0 0 1088.500 573.500A187 187 0 0 1 1274 365.500A187 187 0 0 1 1460.500 540"/>
          <path d="M379.500 519v7M376 522.500h7"/>
          <path d="M1412 575.500h97M1460.500 526v98M1461.500 535v36"/>
          <path d="M642.500 826.500h9v9h-9zM646.500 781v50.500H697"/>
          <g class="axis" stroke="none" fill="#fff" shape-rendering="auto"><text x="648" y="777">Y</text><text x="701" y="830">X</text></g>
        </g>
      </svg>
      <div class="viewlabel">[−][俯视][二维线框]</div>

      <div class="cube">
        <svg width="140" height="140" viewBox="0 0 140 140"><circle cx="70" cy="70" r="54" fill="none" stroke="#454b53" stroke-width="13"/><path d="M44.500 44.500h51v51h-51z" fill="#aeb1b4" stroke="#8d9195"/><path d="M54 54h32v32H54z" fill="#9fa6ac"/>
        <g text-anchor="middle" class="compass"><text x="70" y="21">北</text><text x="70" y="134">南</text><text x="14" y="78">西</text><text x="126" y="78">东</text></g><text x="70" y="80" text-anchor="middle" class="up">上</text></svg>
      </div>
      <button class="wcs">WCS<svg width="9" height="5"><path d="M.5.500h8l-4 4z" fill="none" stroke="#c8c9d2"/></svg></button>

      <div class="navbar">
        <button class="tiny" aria-label="关闭"><svg width="8" height="8"><circle cx="4" cy="4" r="4" fill="#454b51"/><path d="M2 2l4 4M6 2L2 6" stroke="#6a7076"/></svg></button>
        <button aria-label="导航控制盘"><svg width="24" height="24"><path d="M12 1h10v10a11 11 0 1 1-10-10z" fill="#5e646c" stroke="#454b53" stroke-width="1.500"/><circle cx="11" cy="12" r="6" fill="#5b6167" stroke="#454b53" stroke-width="1.500"/><path d="M7 17l-3 3M15 17l3 3" stroke="#454b53"/></svg></button>
        <svg class="navdn"><use href="#dn"/></svg>
        <button class="line" aria-label="平移"><svg width="24" height="24"><path d="M7 22L1 13q2-3 4 0l1 1L5 5q2-2 3 0l1 6V2q2-2 3 0v9l2-9q2-1 3 1l-1 9 3-7q2-1 3 1l-3 12-2 4z" fill="#5f656e" stroke="#454b53" stroke-width="1.200"/></svg></button>
        <button class="zoom" aria-label="范围缩放"><svg width="24" height="24"><path d="M2 2l12 12M14 2L2 14" stroke="#454b53" stroke-width="1.500"/><path d="M0 0h5L0 5zM16 0v5l-5-5zM0 16v-5l5 5z" fill="#454b53"/><circle cx="16" cy="15" r="5" fill="#5f656e" stroke="#454b53" stroke-width="1.500"/><path d="M19 18l5 4" stroke="#454b53" stroke-width="3"/></svg></button>
        <svg class="navdn"><use href="#dn"/></svg>
        <button class="zoom" aria-label="动态观察"><svg width="24" height="24"><path d="M4 17Q-2 13 4 10t16 0 0 7-10 1" fill="none" stroke="#454b53" stroke-width="1.500"/><path d="M12 0l4 5h-2v17h-4V5H8z" fill="#5f656e" stroke="#454b53"/><path d="M8 14v8l-5-4z" fill="#454b53"/></svg></button>
        <svg class="navdn"><use href="#dn"/></svg>
        <button class="line zoom" aria-label="ShowMotion"><svg width="24" height="24"><path d="M1 1h6v6H1zM9 1h6v6H9zM17 1h6v6h-6zM1 10h16v13H1z" fill="#5f656e" stroke="#454b53" stroke-width="1.500"/><path d="M6 12v9l7-4.500z" fill="#454b53"/></svg></button>
        <button class="tiny" aria-label="选项"><svg width="8" height="8"><circle cx="4" cy="4" r="3.500" fill="none" stroke="#454b51"/><path d="M2 4h4" stroke="#454b51"/></svg></button>
      </div>

      <input class="dyn" type="text" value="0" aria-label="动态输入">
      <div class="dynangle">90°</div>
      <div class="dyntip">指定圆弧的端点(按住 Ctrl 键以切换方向)或<svg width="12" height="12"><path d="M.5.500h11v11H.5z" fill="#fff" stroke="#555"/><path d="M6 2v6M4 6l2 2 2-2M3 9.500h6" fill="none" stroke="#222"/></svg></div>

      <div class="command">
        <p class="hist h1">指定圆弧的端点<code>(</code>按住<code> Ctrl </code>键以切换方向<code>)</code>或</p>
        <p class="hist h2"><code>[</code>角度<code>(A)/</code>圆心<code>(CE)/</code>闭合<code>(CL)/</code>方向<code>(D)/</code>半宽<code>(H)/</code>直线<code>(L)/</code>半径<code>(R)/</code>第二个点<code>(S)/</code>放弃<code>(U)/</code>宽度<code>(W)]:</code></p>
        <p class="hist">指定圆弧的端点<code>(</code>按住<code> Ctrl </code>键以切换方向<code>)</code>或</p>
        <div class="cmdbar">
          <div class="cmdctl"><i class="vgrip"></i><button aria-label="关闭"><svg width="9" height="9"><path d="M0 0l9 9M9 0L0 9" stroke="#ddd" stroke-width="1.800"/></svg></button><button class="tool" aria-label="自定义"><svg width="16" height="16"><path d="M1 15l7-7" stroke="#eee" stroke-width="2.500"/><path d="M7 7q-1-5 5-6l-2 3 2 2 3-2q1 5-5 6z" fill="#eee"/></svg></button></div>
          <div class="cmdline">
            <svg class="ghost" width="16" height="16"><use href="#pline"/></svg><svg class="cdn" width="8" height="5"><path d="M0 0h8L4 5z" fill="#555"/></svg>
            <b>PLINE</b><span class="br">[</span><span class="opts"><button>角度(<em>A</em>)</button><button>圆心(<em>CE</em>)</button><button>闭合(<em>CL</em>)</button><button>方向(<em>D</em>)</button><button>半宽(<em>H</em>)</button><button>直线(<em>L</em>)</button><button>半径(<em>R</em>)</button><button>第二个点(<em>S</em>)</button><button>放弃(<em>U</em>)</button><button>宽度(<em>W</em>)</button></span><span>]:</span>
            <svg class="cup" width="7" height="5"><path d="M0 5h7L3.500 0z" fill="#555"/></svg>
          </div>
        </div>
      </div>
      <div class="ime"><span>EN</span><svg width="10" height="12"><path d="M4 .5q6 4 3 8T.5 10q4-3 4-5T4 .5z" fill="none" stroke="#333"/></svg><span>简</span></div>
    </section>
  </main>

  <footer class="status">
    <nav class="layouts"><button class="on">模型</button><button>布局1</button><button>布局2</button><button class="plus" aria-label="新建布局"><svg width="8" height="8"><path d="M4 0v8M0 4h8" stroke="#b8bcc2" stroke-width="2"/></svg></button></nav>
    <div class="sgroups">
      <div class="sg coord"><output>2854.1047, 895.7593, 0.0000</output></div>
      <div class="sg"><button class="txt">模型</button></div>
      <div class="sg"><button class="si" aria-label="栅格"><svg><path d="M4.500 0v16M8.500 0v16M12.500 0v16M0 4.500h16M0 8.500h16M0 12.500h16" stroke="#eee"/></svg></button><button class="si" aria-label="捕捉"><svg><path d="M2 3h2v2H2zM7 3h2v2H7zM12 3h2v2h-2zM2 8h2v2H2zM7 8h2v2H7zM12 8h2v2h-2zM2 13h2v2H2zM7 13h2v2H7zM12 13h2v2h-2z" fill="#eee"/></svg></button><button class="sa" aria-label="捕捉选项"><svg class="dn"><use href="#dn"/></svg></button></div>
      <div class="sg">
        <button class="si" aria-label="推断约束"><svg><path d="M4.500 11V1.500h9v7h-5V15M1 11.500h4V16" fill="none" stroke="#ddd" stroke-width="1.300"/></svg></button>
        <button class="si on" aria-label="动态输入"><svg><path d="M4.500 2v7M1 5.500h7" stroke="#fff" stroke-width="1.500"/><path d="M7 11h9v5H7z" fill="#fff"/></svg></button>
        <button class="si" aria-label="正交"><svg><path d="M2.500 0v15h12M2.500 9.500h5V15" fill="none" stroke="#ddd"/></svg></button>
        <button class="si" aria-label="极轴"><svg><circle cx="7" cy="9" r="6" fill="none" stroke="#ddd"/><path d="M7 9h9M7 9l5-8" stroke="#ddd"/></svg></button><button class="sa" aria-label="极轴选项"><svg class="dn"><use href="#dn"/></svg></button>
        <button class="si" aria-label="等轴测"><svg><path d="M7.500 0v16" stroke="#5fd07c"/><path d="M1 1l14 15" stroke="#ff6b6b"/></svg></button><button class="sa" aria-label="等轴测选项"><svg class="dn"><use href="#dn"/></svg></button>
        <button class="si on" aria-label="对象捕捉追踪"><svg><path d="M1 14L14 2M1 14.500h14" stroke="#fff" stroke-width="1.300"/><path d="M5 8h3v3H5z" fill="#fff"/></svg></button>
        <button class="si" aria-label="对象捕捉"><svg><path d="M5 3.500h11V15M2.500 8v8" fill="none" stroke="#ddd"/><path d="M.5 1.500h4v4h-4z" fill="none" stroke="#ff9a5c" stroke-width="1.300"/></svg></button><button class="sa" aria-label="对象捕捉选项"><svg class="dn"><use href="#dn"/></svg></button>
      </div>
      <div class="sg">
        <button class="si" aria-label="线宽"><svg><path d="M0 2.500h16M0 6.500h9M0 10.500h16" stroke="#ddd" stroke-width="2"/><path d="M0 14.500h16" stroke="#ddd" stroke-width="3"/></svg></button>
        <button class="si on" aria-label="透明度"><svg><path d="M1.500 1.500h13v14h-13z" fill="none" stroke="#fff"/><path d="M2 2h3v3H2zM8 2h3v3H8zM5 5h3v3H5zM11 5h3v3h-3zM2 8h3v3H2zM8 8h3v3H8zM5 11h3v3H5zM11 11h3v3h-3z" fill="#fff"/></svg></button>
        <button class="si" aria-label="选择循环"><svg><path d="M4 0v7M0 3.500h7M8 4.500h8" stroke="#ddd"/><path d="M6 7h10v9H6z" fill="#82d79a"/></svg></button>
        <button class="si" aria-label="三维对象捕捉"><svg><path d="M3.500 11V5.500l4-4h8v7l-4 4M3.500 5.500h8v7h-6M11.500 5.500l4-4" fill="none" stroke="#ddd"/><path d="M.5 11.500h4v4h-4z" fill="none" stroke="#ff9a5c"/></svg></button><button class="sa" aria-label="三维捕捉选项"><svg class="dn"><use href="#dn"/></svg></button>
      </div>
      <div class="sg">
        <button class="si on" aria-label="动态 UCS"><svg><path d="M3.500 2v12.500H15M1.500 4l2-3 2 3M13 12.500l3 2-3 2" fill="none" stroke="#fff" stroke-width="1.300"/><path d="M10 3l-3 5h4l-2 4 6-6h-4l3-3z" fill="#fff"/></svg></button>
        <button class="si" aria-label="选择过滤"><svg><path d="M2 4h8v11H2zM6 1h9v9" fill="none" stroke="#ddd"/><path d="M0 3h3v3H0zM9 3h3v3H9zM0 12h3v3H0zM13 0h3v3h-3z" fill="#6dbdf7"/></svg></button><button class="sa" aria-label="过滤选项"><svg class="dn"><use href="#dn"/></svg></button>
        <button class="si on" aria-label="小控件"><svg><path d="M8 1v8l-6 5M8 9l6 5" fill="none" stroke="#fff" stroke-width="1.300"/><path d="M8 2L3 6v6l5 3 5-3V6z" fill="none" stroke="#fff"/></svg></button><button class="sa" aria-label="小控件选项"><svg class="dn"><use href="#dn"/></svg></button>
      </div>
      <div class="sg">
        <button class="si on" aria-label="注释可见性"><svg><path d="M7 1l2 6 4 9h-3l-3-6-3 6H1l4-9z" fill="#fff"/><circle cx="13" cy="4" r="2.500" fill="none" stroke="#fff"/></svg></button>
        <button class="si" aria-label="自动缩放"><svg><path d="M6 2l2 5 4 9H9l-3-6-3 6H0l4-9z" fill="#d8d8d8"/><path d="M12 0l-3 5h3l-1 4 5-6h-3l1-3z" fill="#d8d8d8"/></svg></button>
        <button class="si" aria-label="注释比例"><svg><path d="M8 1l2 6 4 9h-3l-3-6-3 6H2l4-9z" fill="#d8d8d8"/></svg></button>
        <button class="scale">1:1 / 100%<svg class="dn"><use href="#dn"/></svg></button>
      </div>
      <div class="sg"><button class="si" aria-label="切换工作空间"><svg><circle cx="8" cy="8" r="4.500" fill="none" stroke="#d8d8d8" stroke-width="3"/><path d="M8 0v3M8 13v3M0 8h3M13 8h3M2 2l3 3M11 11l3 3M2 14l3-3M11 5l3-3" stroke="#d8d8d8" stroke-width="2.500"/></svg></button><button class="sa" aria-label="工作空间选项"><svg class="dn"><use href="#dn"/></svg></button></div>
      <div class="sg"><button class="si" aria-label="注释监视器"><svg><path d="M8 1v15M0 8.500h16" stroke="#ddd" stroke-width="2"/></svg></button></div>
      <div class="sg"><button class="units"><svg><path d="M4 0h8v3H8v1h4v2H9v1h3v2H8v1h4v2H9v1h3v3H4z" fill="#ddd"/></svg><span>小数</span><svg class="dn"><use href="#dn"/></svg></button></div>
      <div class="sg"><button class="si" aria-label="快捷特性"><svg><path d="M2.500 1.500h12V16M2.500 1.500V16" fill="none" stroke="#ddd"/><path d="M5 5h2M9 5h4M5 9h2M9 9h4M5 13h2M9 13h4" stroke="#ddd" stroke-width="2"/></svg></button></div>
      <div class="sg"><button class="si" aria-label="锁定用户界面"><svg><path d="M7 12.500H.5v-11h13V6" fill="none" stroke="#ddd" stroke-width="1.300"/><path d="M7 11h6v5H7z" fill="#ddd"/><path d="M12 11V9q1-2 3 0v2" fill="none" stroke="#ddd"/></svg></button><button class="sa" aria-label="锁定选项"><svg class="dn"><use href="#dn"/></svg></button></div>
      <div class="sg last">
        <button class="si" aria-label="隔离对象"><svg><path d="M.5 1.500h6v6h-6zM8 16l-3-5h6z" fill="none" stroke="#ddd"/><circle cx="12" cy="6" r="3" fill="none" stroke="#ddd"/></svg></button>
        <button class="si on" aria-label="图形性能"><svg><circle cx="8" cy="8" r="7.500" fill="#7d93b5" stroke="#8fa6c8"/><path d="M4 13l9-9" stroke="#3b4453"/></svg></button>
        <button class="si" aria-label="全屏显示"><svg><path d="M.5 1.500h15V16M.5 1.500V16M9 7l4-4M10 3h3v3M7 10l-4 4M3 11v3h3" fill="none" stroke="#ddd"/></svg></button>
        <button class="si" aria-label="自定义"><svg><path d="M0 3h16M0 8.500h16M0 14h16" stroke="#ddd" stroke-width="2"/></svg></button>
      </div>
    </div>
  </footer>
</div>

<div class="mark">
  <svg width="44" height="40" viewBox="0 0 44 40"><path d="M42 0Q18 2 8 14-1 26 3 34 7 39 14 36 5 34 10 23 18 8 42 0z" fill="#17689c"/><path d="M42 2Q24 12 19 22q-2 6 3 5 7-4 5-12 15-2 15 7 0 10-18 15-10 3-19 3 16-6 21-12-11 8-16 4-3-6 6-16Q26 4 42 2z" fill="url(#swirl)"/></svg>
  <div><strong>极光下载站</strong><span>www.xz7.com</span></div>
</div>
</body>
</html>
```
FILE: styles.css
```css
* { box-sizing: border-box; }
body {
  margin: 0;
  height: 100vh;
  overflow: hidden;
  position: relative;
  background: #f4f6f8;
  font: 12px/16px "Noto Sans", "Noto Sans CJK SC", sans-serif;
  color: #f0f0f0;
}
.defs { position: absolute; width: 0; height: 0; }
button, select, input { font: inherit; color: inherit; margin: 0; padding: 0; border: 0; background: none; }
button { display: flex; align-items: center; justify-content: center; white-space: nowrap; }
svg { flex: none; overflow: visible; }
a { color: inherit; text-decoration: none; }
.dn { width: 8px; height: 4px; }

.frame {
  display: flex;
  flex-direction: column;
  height: 100vh;
  margin: 0 2px;
  border: 1px solid #0a8fd8;
  border-bottom: 0;
  background: #222933;
}

/* title bar */
.titlebar { display: flex; align-items: center; height: 26px; padding: 1px 7px 0 9px; }
.quick { display: flex; align-items: center; gap: 8px; }
.quick button { gap: 5px; }
.quick .app { gap: 6px; margin-right: 10px; }
.quick .dn { width: 7px; }
.quick .dim svg { opacity: .45; }
.quick .share { color: #6db8ee; margin-left: 4px; }
.quick button:nth-child(9), .quick .dim { gap: 5px; }
.apptitle { flex: 1; display: flex; justify-content: center; gap: 18px; margin: 0; font-size: 12px; font-weight: 400; }
.account { display: flex; align-items: center; }
.search { width: 178px; height: 20px; margin: 0 6px; padding: 0 4px; background: #485163; font-style: italic; }
.search::placeholder { color: #b4b8c0; opacity: 1; }
.login { margin: 0 12px 0 7px; gap: 5px; }
.login .sm-dn { margin-left: 54px; }
.sm-dn { width: 6px; }
.adsk, .help { gap: 6px; }
.adsk { margin-left: 9px; padding-right: 9px; border-right: 1px solid #4b5464; height: 20px; }
.help { margin-left: 9px; }
.q { font: 14px "Noto Sans", sans-serif; fill: #222933; }
.winbtns { display: flex; gap: 13px; margin-left: 68px; padding-right: 3px; }

/* menu row */
.menurow { display: flex; align-items: center; justify-content: space-between; height: 22px; padding: 2px 6px 0 17px; border-bottom: 1px solid #3b4453; color: #b4b8be; }
.menus { display: flex; gap: 25px; }
.docbtns { display: flex; gap: 6px; }

/* ribbon tabs */
.rtabs { display: flex; align-items: flex-end; height: 24px; padding-left: 7px; color: #b4b8be; }
.rtabs button { height: 20px; padding: 1px 10px 0; }
.rtabs .on { padding: 1px 9px 0; margin-right: 1px; background: #3b4453; color: #fff; }
.rtabs .mini { padding-left: 24px; gap: 4px; }
.rtabs .mini .dn { width: 6px; }

/* ribbon */
.ribbon { display: flex; height: 99px; margin: 0 4px; background: #3b4453; }
.panel { display: flex; flex-direction: column; border-right: 1px solid #262d38; }
.panel + .panel .tools { padding-left: 5px; }
.tools { display: flex; height: 78px; padding: 6px 0 0 2px; }
.big { flex-direction: column; justify-content: flex-start; width: 40px; padding-top: 1px; gap: 0; }
.big > svg:first-child { margin-bottom: 5px; }
.big .dn { width: 6px; margin-top: 3px; }
.big.two { line-height: 16px; }
.col { display: flex; flex-direction: column; align-items: flex-start; margin-left: 4px; }
.sm { height: 24px; gap: 5px; justify-content: flex-start; }
.sm > svg { width: 16px; height: 16px; }
.sm > svg.dn { width: 6px; height: 4px; margin-left: 2px; }
.sm > svg.dn.end { margin-left: 6px; }
.ptitle { display: flex; align-items: center; justify-content: center; width: 100%; height: 21px; padding-top: 2px; gap: 6px; }
.p-draw { width: 211px; }
.p-draw .col { margin-left: 10px; }
.p-modify { width: 227px; }
.p-modify.panel .tools { padding-left: 7px; }
.grid4 { display: grid; grid-template-columns: 60px 60px 72px 24px; grid-auto-rows: 24px; }
.p-anno { width: 156px; }
.p-anno .tools { gap: 2px; }
.p-anno .col { margin-left: 3px; }
.p-layer { width: 252px; }
.p-layer .big, .p-prop .big, .p-group .big, .p-util .big { width: 36px; }
.p-layer .col, .p-prop .col { margin-left: 2px; }
.p-layer.panel .tools { padding: 6px 2px 0 3px; }
.p-block { width: 135px; }
.p-block.panel .tools { padding-left: 1px; }
.p-prop { width: 244px; }
.p-prop.panel .tools { padding: 6px 2px 0 4px; }
.p-group { width: 68px; }
.p-group.panel .tools { padding-left: 2px; }
.p-group .col { margin-left: 6px; }
.p-util { width: 75px; }
.p-util.panel .tools { padding-left: 6px; }
.p-util .col { margin-left: 10px; }
.p-clip { width: 78px; border-right: 0; }
.p-clip .col { margin-left: 8px; }
.bigA { font: 36px/32px "Open Sans", "Noto Sans", sans-serif; fill: #d8d8d8; stroke: #d8d8d8; }
.wide { flex: 1; align-items: stretch; }
.combo { display: flex; align-items: center; height: 22px; margin: 1px 0; padding: 0 2px 0 4px; background: #4d596c; border: 1px solid #2a3240; }
.combo select { flex: 1; min-width: 0; appearance: none; }
.combo .dn { width: 9px; height: 5px; }
.layercombo { gap: 5px; padding-left: 5px; }
.swatch { width: 16px; height: 16px; background: #fff; border: 1px solid #ccc; margin: 0 10px 0 8px; }
.swatch.small { width: 14px; height: 14px; border-color: #111; margin: 0; }
.rule { width: 64px; height: 1px; background: #fff; margin-right: 2px; }
.lrow { display: flex; gap: 8px; padding-left: 4px; }
.pressed { width: 24px; height: 22px; margin: 1px -4px; justify-content: center; border: 1px solid #6dbdf7; background: #2f4a63; }
.ptitlerow { display: flex; align-items: center; }
.launch { margin: 0 4px 0 -12px; }

/* file tabs */
.filetabs { display: flex; align-items: flex-end; height: 30px; margin-left: 3px; padding-left: 19px; border-bottom: 4px solid #3b4453; }
.ftab { height: 22px; width: 127px; padding: 2px 13px 0; justify-content: space-between; border-radius: 9px 9px 0 0; background: #2d3440; color: #b4b8be; }
.ftab.on { width: 124px; padding: 2px 16px 0 9px; background: #3b4453; color: #fff; font-weight: 700; }
.plus { height: 16px; width: 20px; background: #2d3440; border-radius: 3px 8px; }
.filetabs .plus { margin: 0 0 2px 6px; }

/* work area */
.work { flex: 1; display: flex; min-height: 0; background: #212830; }
.dock { width: 29px; margin-left: 3px; background: #3b4453; }
.toolbox { width: 25px; padding-bottom: 1px; border: 1px solid #222933; border-left: 0; }
.toolbox button { width: 24px; height: 22px; }
.toolbox button svg { width: 16px; height: 16px; }
.toolbox .mtext { font-size: 18px; font-weight: 500; color: #d8d8d8; }
.grip { display: block; width: 14px; height: 3px; margin: 2px 0 3px 4px; background: repeating-linear-gradient(90deg, #c8ccd2 0 1px, transparent 1px 2px); }
.canvas { position: relative; flex: 1; overflow: hidden; }
.drawing { position: absolute; inset: 0; width: 100%; height: 100%; }
.axis { font: 300 18px Lato, sans-serif; }
.viewlabel { position: absolute; left: 3px; top: 5px; color: #000; }

.cube { position: absolute; right: 16px; top: 12px; height: 140px; }
.compass { font: 18px "Noto Sans CJK SC", sans-serif; fill: #bcbebf; }
.up { font: 300 28px "Noto Sans CJK SC", sans-serif; fill: #555b61; }
.wcs { position: absolute; right: 62px; top: 169px; width: 48px; height: 18px; gap: 6px; background: #9899a6; border: 1px solid #777985; border-radius: 4px; color: #55575f; font: 11px "Liberation Sans", sans-serif; }
.navbar { position: absolute; right: 7px; top: 212px; width: 32px; display: flex; flex-direction: column; align-items: center; background: #5b6167; border-radius: 4px; border: 1px solid #6b7075; box-shadow: 0 0 2px 1px #1a1f25; }
.navbar button { height: 30px; width: 100%; }
.navbar .tiny { height: 14px; justify-content: flex-end; padding: 0 2px 4px 0; }
.navbar .zoom { height: 28px; }
.navbar .line { border-top: 1px solid #6a7076; margin-top: 1px; }
.navbar .tiny:last-child { padding: 4px 2px 0 0; height: 17px; }
.navdn { width: 6px; height: 4px; margin: 3px 0 4px; filter: brightness(.35); }

.dyn { position: absolute; left: 1433px; top: 363px; width: 22px; height: 22px; padding-left: 3px; border: 1px solid #000; color: #fff; background: linear-gradient(#0078d7, #0078d7) 3px 1px / 7px 17px no-repeat #fff; }
.dynangle, .dyntip { position: absolute; background: #989898; border: 1px solid #000; color: #000; padding: 0 3px; white-space: nowrap; }
.dynangle { left: 1408px; top: 384px; width: 34px; height: 22px; line-height: 20px; }
.dyntip { left: 1441px; top: 390px; width: 268px; height: 25px; line-height: 20px; }
.dyntip svg { position: absolute; right: 3px; bottom: 4px; }

/* command line */
.command { position: absolute; left: 377px; right: 380px; bottom: 1px; font: 12px/16px "DejaVu Sans Mono", "Noto Sans CJK SC", monospace; }
.hist { width: max-content; height: 16px; margin: 0 0 4px 62px; padding: 0 2px; border-radius: 3px; background: #555; font-size: 13px; color: #f5f5f5; white-space: pre; }
.hist code { font: 12px "DejaVu Sans Mono", monospace; }
.h1 { background: #474a4c; color: #b0b0b0; }
.h2 { background: #505252; color: #d0d0d0; }
.cmdbar { display: flex; height: 25px; }
.cmdctl { display: flex; align-items: center; gap: 6px; width: 56px; padding-left: 4px; background: #2d3440; }
.cmdctl .tool { margin-left: 4px; }
.vgrip { width: 5px; height: 17px; background: conic-gradient(#d0d0d0 25%, transparent 0) 0 0 / 3px 3px; }
.cmdline { flex: 1; display: flex; align-items: center; background: #fff; color: #000; padding: 1px 6px 0 4px; }
.ghost { opacity: .6; }
.cdn { margin: 0 6px 0 2px; }
.br { margin-left: 4px; }
.opts { display: flex; gap: 5px; }
.opts button { height: 16px; padding: 0 1px; background: #d0d0d0; border-radius: 3px; }
.opts em { font-style: normal; color: #1414e6; }
.cup { margin-left: auto; }
.ime { position: absolute; right: 675px; bottom: 11px; display: flex; align-items: center; gap: 5px; height: 26px; padding: 0 6px; background: #fff; color: #333; border-radius: 6px; box-shadow: 0 1px 3px 1px #8888; }

/* status bar */
.status { display: flex; justify-content: space-between; height: 20px; overflow: hidden; border-top: 1px solid #4d5158; padding: 0 4px 0 13px; }
.layouts { display: flex; color: #b4b8be; height: 17px; }
.layouts button { width: 54px; height: 17px; padding-right: 2px; background: #262d38; border-radius: 2px 2px 9px 9px; }
.layouts .on { width: 50px; padding: 0; background: #3b4453; color: #fff; font-weight: 700; }
.layouts .plus { width: 22px; margin-left: 3px; padding: 0; background: #2d3440; border-radius: 9px 2px; }
.sgroups { display: flex; align-items: flex-start; gap: 2px; margin-top: 1px; }
.sg { display: flex; height: 24px; background: #3b4453; }
.coord { justify-content: flex-end; align-items: center; width: 180px; padding-right: 5px; color: #c8ccd2; margin-right: 1px; }
.txt { width: 30px; font-weight: 500; }
.si { width: 24px; height: 24px; }
.si svg, .units svg:first-child { width: 16px; height: 16px; }
.si.on { width: 22px; margin-left: 2px; background: #5b8bc4; }
.last .si { width: 26px; }
.last .si.on { width: 24px; }
.sa { width: 17px; }
.scale { gap: 4px; padding: 0 2px; }
.units { gap: 8px; width: 96px; padding: 0 5px; }
.units .dn { margin-left: auto; }

/* site mark */
.mark { position: absolute; right: 8px; bottom: 8px; display: flex; opacity: .75; }
.mark div { display: flex; flex-direction: column; }
.mark strong { font: 500 21px/24px "Noto Sans CJK SC", sans-serif; color: #1b5599; }
.mark span { font: 700 17px/18px "Liberation Sans", sans-serif; color: #1c7d3c; }
```
